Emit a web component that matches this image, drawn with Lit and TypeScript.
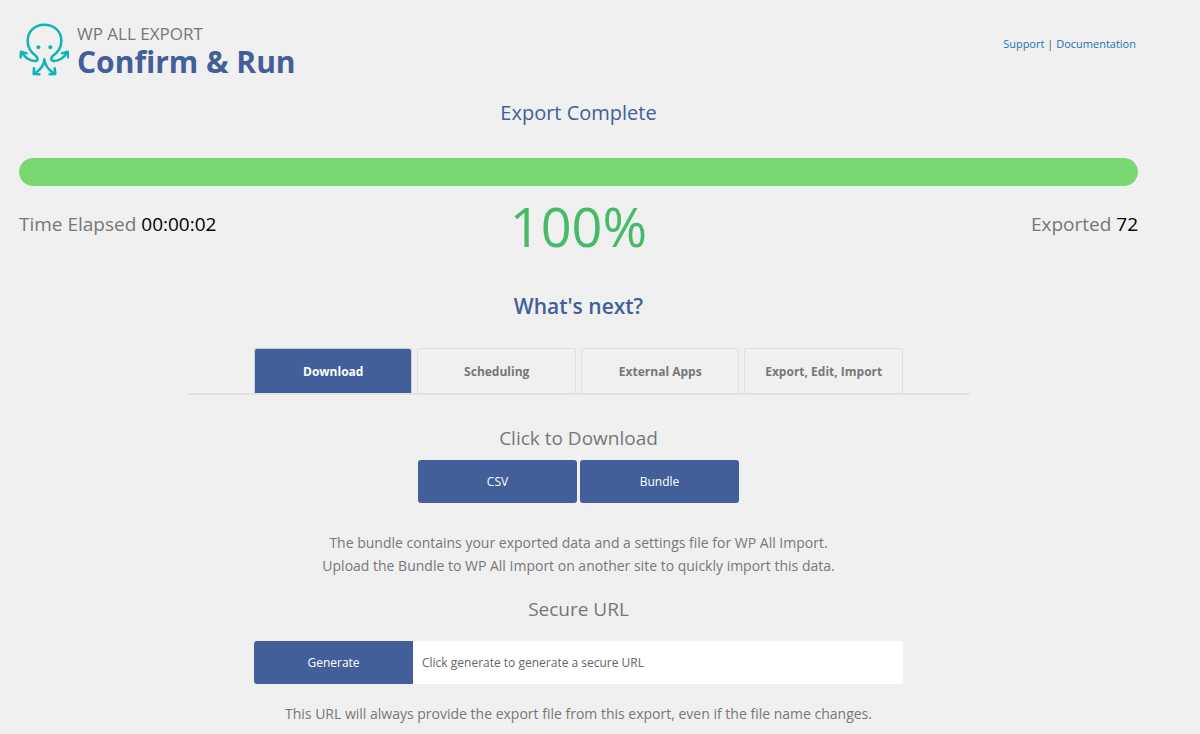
import { LitElement, html, css } from "lit";
import { customElement, state } from "lit/decorators.js";

const TABS = ["Download", "Scheduling", "External Apps", "Export, Edit, Import"];

@customElement("app-root")
export class AppRoot extends LitElement {
  @state() private active = 0;
  @state() private progress = 100;

  static styles = css`
    :host {
      display: block;
      box-sizing: border-box;
      min-height: 100vh;
      padding: 23px 62px 8px 19px;
      background: #f0f0f0;
      color: #777;
      font-family: "Open Sans", "Noto Sans", sans-serif;
      text-align: center;
    }
    h1, h2, h3, p { margin: 0; font-weight: 400; }
    button, input { font: inherit; box-sizing: border-box; }
    header {
      display: flex;
      align-items: flex-start;
      text-align: left;
    }
    .logo { width: 50px; height: 53px; flex: none; margin-right: 8px; }
    .brand { flex: 1; }
    .product { font-size: 17px; line-height: 22px; }
    h1 { font-size: 30px; line-height: 34px; font-weight: 700; color: #425f9a; }
    .links { font-size: 11px; line-height: 16px; padding: 13px 2px 0 0; color: #555; }
    .links a { color: #2271b1; text-decoration: none; }
    .status { margin-top: 20px; font-size: 20px; line-height: 28px; color: #425f9a; }
    .bar { height: 28px; margin-top: 31px; border-radius: 14px; background: #e2e2e2; overflow: hidden; }
    .fill { height: 100%; border-radius: 14px; background: #77d872; }
    .stats {
      display: grid;
      grid-template-columns: 1fr auto 1fr;
      font-size: 19px;
      line-height: 28px;
      margin-top: 3px;
    }
    .stats > :first-child { text-align: left; padding-top: 21px; }
    .stats > :last-child { text-align: right; padding-top: 21px; }
    .value { color: #000; }
    .percent { font-size: 54px; line-height: 74px; color: #46ba69; }
    .next { margin-top: 29px; font-size: 21px; line-height: 28px; font-weight: 600; color: #425f9a; }
    .tabs { width: 70%; margin: 28px auto 0; border-bottom: 2px solid #e2e2e2; }
    .tablist {
      display: grid;
      grid-template-columns: repeat(4, 1fr);
      gap: 5px;
      max-width: 649px;
      margin: 0 auto;
    }
    .tab {
      height: 45px;
      padding: 0;
      border: 1px solid #dfdfdf;
      border-bottom: 0;
      border-radius: 3px 3px 0 0;
      background: transparent;
      color: #777;
      font-size: 12px;
      font-weight: 700;
      cursor: pointer;
    }
    .tab.active { background: #425f9a; color: #fff; border-color: #c5cddd; }
    h3 { font-size: 19px; line-height: 28px; }
    .first { margin-top: 29px; }
    .actions { display: flex; justify-content: center; gap: 3px; margin-top: 8px; }
    .primary {
      width: 159px;
      height: 43px;
      padding: 0;
      border: 0;
      border-radius: 3px;
      background: #425f9a;
      color: #fff;
      font-size: 12px;
      cursor: pointer;
    }
    .note { font-size: 14px; line-height: 23px; margin-top: 28px; }
    .second { margin-top: 18px; }
    .secure { display: flex; max-width: 649px; margin: 18px auto 0; }
    .secure .primary { flex: none; border-radius: 3px 0 0 3px; }
    .secure input {
      flex: 1;
      min-width: 0;
      height: 43px;
      padding: 0 9px;
      border: 0;
      border-radius: 0 3px 3px 0;
      background: #fff;
      color: #666;
      font-size: 12px;
    }
    .last { margin-top: 18px; }
  `;

  render() {
    return html`
      <header>
        <svg class="logo" viewBox="27 24 150 159" fill="none" stroke="#0fb5b5" stroke-width="7.5" stroke-linecap="round" stroke-linejoin="round" aria-hidden="true">
          <path d="M36 112 C44 128 61 139 76 138 C85 137 84 129 78 123 C63 112 53 98 53 78 C53 48 75 29 103 29 C132 29 154 48 154 78 C154 98 144 112 128 123 C122 129 122 137 131 138 C146 139 163 128 171 112" />
          <path d="M32 127 L33 110 L50 115 M156 115 L173 110 L175 127" />
          <path d="M103 133 C102 151 91 165 74 175 M103 133 C105 151 115 165 133 175" />
          <path d="M72 160 L71 177 L88 178 M134 160 L136 177 L119 178" />
          <g fill="#0fb5b5" stroke="none"><circle cx="85" cy="97" r="6" /><circle cx="121" cy="97" r="6" /></g>
        </svg>
        <div class="brand">
          <div class="product">WP ALL EXPORT</div>
          <h1>Confirm &amp; Run</h1>
        </div>
        <nav class="links"><a href="#support">Support</a> | <a href="#documentation">Documentation</a></nav>
      </header>
      <main>
        <h2 class="status">Export Complete</h2>
        <div class="bar" role="progressbar" aria-label="Export progress" aria-valuenow=${this.progress}>
          <div class="fill" style="width:${this.progress}%"></div>
        </div>
        <div class="stats">
          <div>Time Elapsed <span class="value">00:00:02</span></div>
          <div class="percent">${this.progress}%</div>
          <div>Exported <span class="value">72</span></div>
        </div>
        <h2 class="next">What's next?</h2>
        <div class="tabs">
          <div class="tablist" role="tablist">
            ${TABS.map((t, i) => html`<button role="tab" class="tab ${i === this.active ? "active" : ""}" aria-selected=${i === this.active} @click=${() => (this.active = i)}>${t}</button>`)}
          </div>
        </div>
        <h3 class="first">Click to Download</h3>
        <div class="actions">
          <button class="primary">CSV</button>
          <button class="primary">Bundle</button>
        </div>
        <p class="note">The bundle contains your exported data and a settings file for WP All Import.<br />Upload the Bundle to WP All Import on another site to quickly import this data.</p>
        <h3 class="second">Secure URL</h3>
        <div class="secure">
          <button class="primary">Generate</button>
          <input type="text" aria-label="Secure URL" readonly .value=${"Click generate to generate a secure URL"} />
        </div>
        <p class="note last">This URL will always provide the export file from this export, even if the file name changes.</p>
      </main>
    `;
  }
}
